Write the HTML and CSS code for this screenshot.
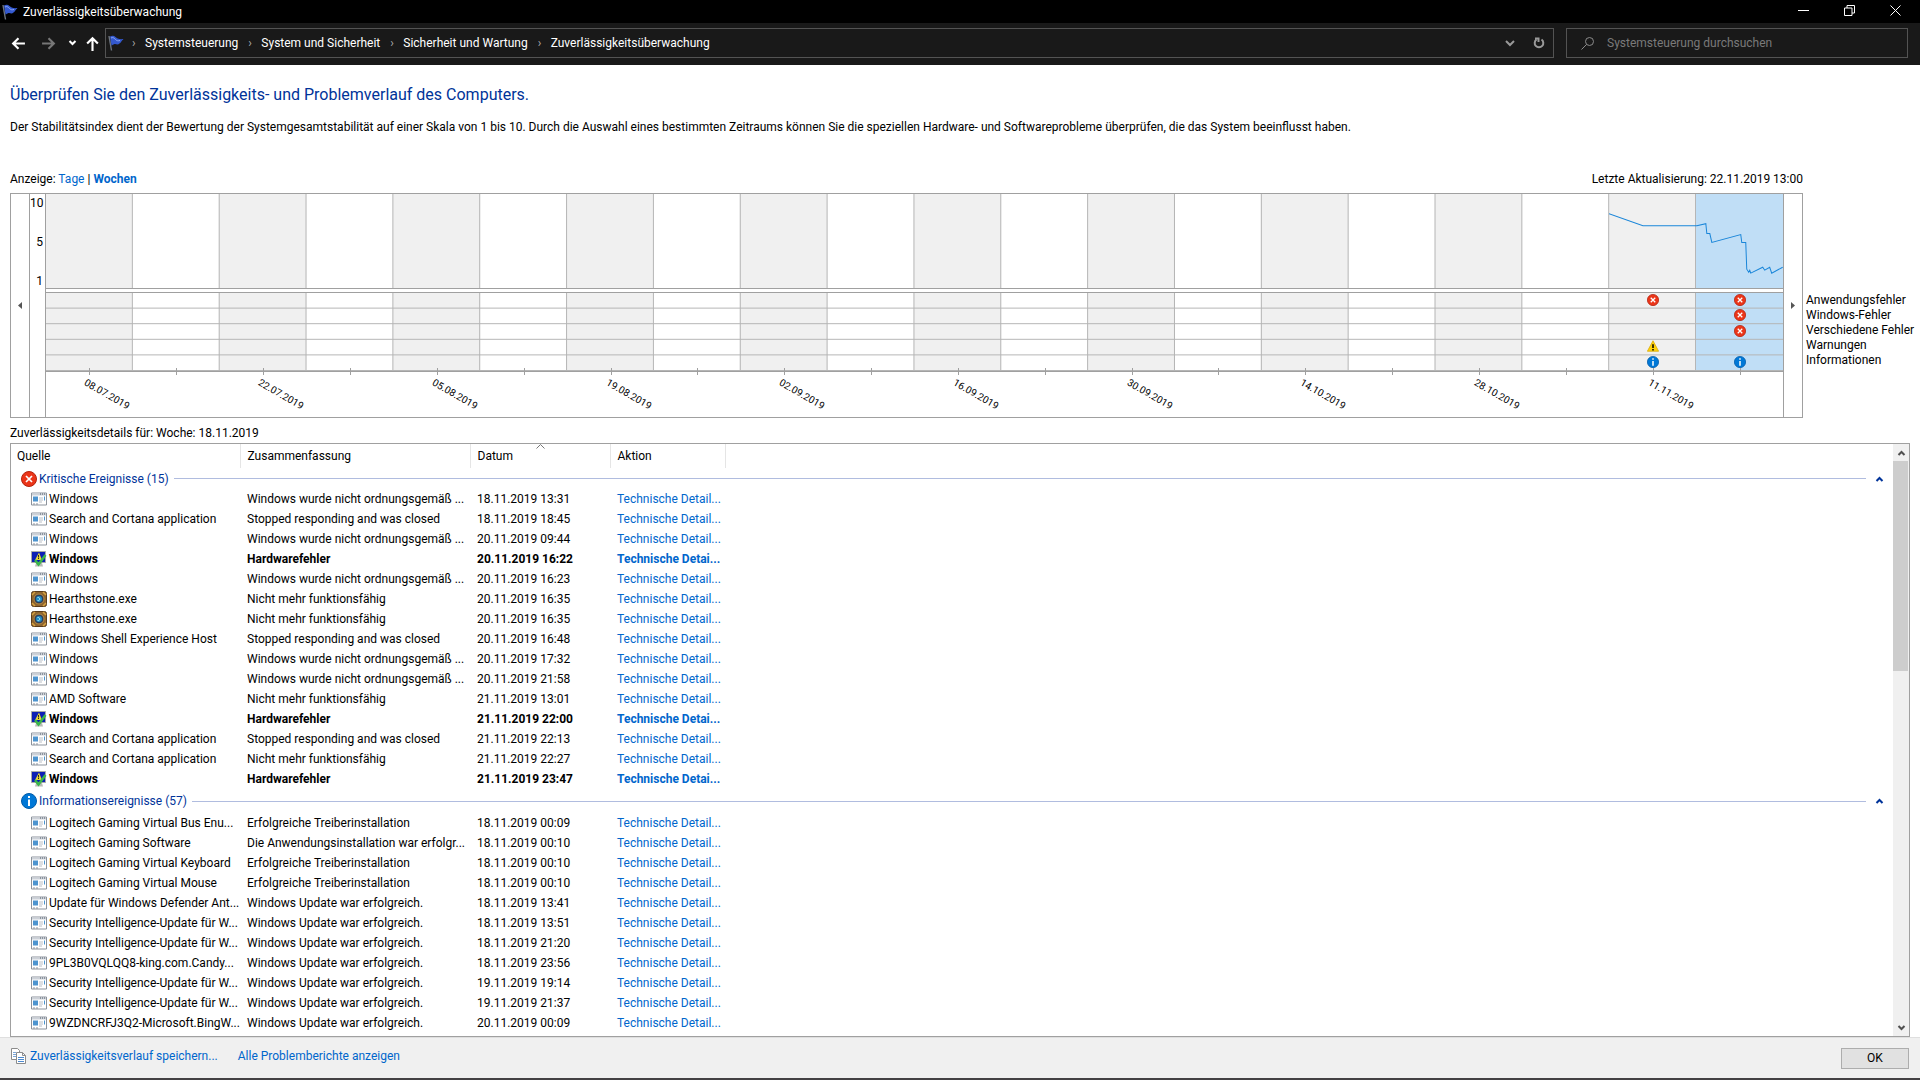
FILE: index.html
```
<!DOCTYPE html>
<html lang="de">
<head>
    <meta charset="UTF-8">
    <meta name="viewport" content="width=device-width, initial-scale=1.0">
    <title>Zuverlässigkeitsüberwachung</title>
    <link rel="stylesheet" href="styles.css">
</head>
<body>
    <svg class="symbols" aria-hidden="true">
        <symbol id="flag" viewBox="0 0 16 16">
            <path d="M1 1l2.500 14.500" stroke="#6d7580" stroke-width="1.400" fill="none"/>
            <path d="M2 1.500C4 0.500 6 0.500 7.500 2S11 4.500 15.500 4C13.500 5.500 13.500 7 11.500 8.500C9.500 10.500 8 8.500 6.500 9S4.500 10 3.500 10.500z" fill="#3459cf"/>
            <path d="M3 3c2-1 3 0 4.500 1.500S10 6 12 5.500" stroke="#8ea8f5" fill="none"/>
        </symbol>
        <symbol id="error" viewBox="0 0 16 16">
            <circle cx="8" cy="8" r="7.500" fill="#eb3519" stroke="#b3220d"/>
            <path d="M5 5l6 6M11 5l-6 6" stroke="#fff" stroke-width="1.700"/>
        </symbol>
        <symbol id="info" viewBox="0 0 16 16">
            <circle cx="8" cy="8" r="7.500" fill="#0078d7" stroke="#005ba8"/>
            <path d="M8 3v2M8 6.500V13" stroke="#fff" stroke-width="2"/>
        </symbol>
        <symbol id="warning" viewBox="0 0 16 16">
            <path d="M8 1l7.500 14H.5z" fill="#ffd20a" stroke="#d9a900"/>
            <path d="M8 5.500v5M8 12v2" stroke="#000" stroke-width="2"/>
        </symbol>
        <symbol id="app" viewBox="0 0 16 13">
            <path d="M.5.5h15v12H.5z" fill="#fff" stroke="#8c939c"/>
            <path d="M1 1h14v2H1z" fill="#ccd1d8"/>
            <path d="M9 1.500h1M11 1.500h1M13 1.500h1" stroke="#4b5665"/>
            <path d="M2 4h5v5H2z" fill="#4d94cf"/>
            <path d="M8 5.500h4M8 7.500h4M8 9.500h3" stroke="#b8bec6"/>
            <path d="M13.500 4v4" stroke="#4d94cf"/>
            <path d="M2 11.500h2M5 11.500h2" stroke="#8c939c"/>
        </symbol>
        <symbol id="hardware" viewBox="0 0 16 16">
            <path d="M.5.5h14v11H.5z" fill="#0c1fb5" stroke="#a9aca6"/>
            <path d="M4 15.500h8l-1-3.500H5z" fill="#b9bcb6"/>
            <path d="M8 1.500L11 9H4z" fill="#e9d53a"/>
            <path d="M7.500 4v2.500M7.500 7v1" stroke="#222"/>
            <path d="M4 9l3.500 4.500L14.500 4" fill="none" stroke="#39b54a" stroke-width="2.500"/>
        </symbol>
        <symbol id="hearthstone" viewBox="0 0 16 16">
            <rect x=".5" y=".5" width="15" height="15" rx="2" fill="#8d6430" stroke="#5a3c1a"/>
            <path d="M1 4l3-3M12 1l3 3M1 12l3 3M15 12l-3 3" stroke="#d5a13f" stroke-width="1.500"/>
            <circle cx="8" cy="8" r="5" fill="#2b3f5c" stroke="#b98a40"/>
            <circle cx="8" cy="8" r="3" fill="#1f8cc4"/>
            <path d="M6.500 9.500c3 1 3-3.500 0-3" fill="none" stroke="#a6ecff"/>
        </symbol>
        <symbol id="up" viewBox="0 0 9 6">
            <path d="M1.500 5l3-3 3 3" fill="none" stroke="currentColor" stroke-width="2"/>
        </symbol>
        <symbol id="down" viewBox="0 0 9 6">
            <path d="M1.500 1l3 3 3-3" fill="none" stroke="currentColor" stroke-width="2"/>
        </symbol>
    </svg>

    <header>
        <div class="titlebar">
            <svg class="flag"><use href="#flag"/></svg>
            <span class="title">Zuverlässigkeitsüberwachung</span>
            <div class="window-buttons">
                <button aria-label="Minimieren"><svg viewBox="0 0 11 11"><path d="M0 5.500h11"/></svg></button>
                <button aria-label="Verkleinern"><svg viewBox="0 0 11 11"><path d="M.5 3h7.500v7.500H.5zM3 3V.5h7.500V8H8"/></svg></button>
                <button aria-label="Schließen"><svg viewBox="0 0 11 11"><path d="M.5.5l10 10M10.500.5l-10 10"/></svg></button>
            </div>
        </div>
        <div class="navbar">
            <button class="back" aria-label="Zurück"><svg viewBox="0 0 14 14"><path d="M13 7H2M7 2L2 7l5 5"/></svg></button>
            <button class="forward" aria-label="Vorwärts" disabled><svg viewBox="0 0 14 14"><path d="M1 7h11M7 2l5 5-5 5"/></svg></button>
            <button class="recent" aria-label="Zuletzt besucht"><svg viewBox="0 0 9 6"><use href="#down"/></svg></button>
            <button class="parent" aria-label="Nach oben"><svg viewBox="0 0 14 14"><path d="M7 14V2M2 7l5-5 5 5"/></svg></button>
            <nav class="address">
                <svg class="flag"><use href="#flag"/></svg>
                <span class="sep">›</span><a href="#">Systemsteuerung</a>
                <span class="sep">›</span><a href="#">System und Sicherheit</a>
                <span class="sep">›</span><a href="#">Sicherheit und Wartung</a>
                <span class="sep">›</span><a href="#">Zuverlässigkeitsüberwachung</a>
                <button class="history" aria-label="Verlauf"><svg viewBox="0 0 10 7"><path d="M1 1l4 4 4-4"/></svg></button>
                <button class="refresh" aria-label="Aktualisieren"><svg viewBox="0 0 12 12"><path d="M8.500 2.500a4.300 4.300 0 1 1-5 0M2 1.500h3.500V5"/></svg></button>
            </nav>
            <label class="search">
                <svg viewBox="0 0 13 13"><circle cx="8.500" cy="4.500" r="4"/><path d="M5.500 7.500L.5 12.500"/></svg>
                <input type="text" placeholder="Systemsteuerung durchsuchen" aria-label="Systemsteuerung durchsuchen">
            </label>
        </div>
    </header>

    <main>
        <h1>Überprüfen Sie den Zuverlässigkeits- und Problemverlauf des Computers.</h1>
        <p class="intro">Der Stabilitätsindex dient der Bewertung der Systemgesamtstabilität auf einer Skala von 1 bis 10. Durch die Auswahl eines bestimmten Zeitraums können Sie die speziellen Hardware- und Softwareprobleme überprüfen, die das System beeinflusst haben.</p>

        <div class="chart-head">
            <span>Anzeige: <a href="#">Tage</a> | <a href="#" class="current">Wochen</a></span>
            <span>Letzte Aktualisierung: 22.11.2019 13:00</span>
        </div>
        <div class="chart-row">
            <div class="chart">
                <button class="scroll-left" aria-label="Frühere Wochen"><svg viewBox="0 0 4 7"><path d="M4 0v7L0 3.500z"/></svg></button>
                <div class="scale"><span>10</span><span>5</span><span>1</span></div>
                <div class="plot">
                    <div class="weeks index">
                        <div class="selected"></div>
                        <svg class="line" viewBox="0 0 174 95" preserveAspectRatio="none">
                            <polyline points="0,20 34,32 88,32 97,30 98,40 101,40 103,49 132,41 133,49 137,49 138,76 140,79 141,77 142,80 154,74 156,77 161,74 163,80 174,74"/>
                        </svg>
                    </div>
                    <div class="weeks events">
                        <div class="week">
                            <svg><use href="#error"/></svg>
                            <svg class="r4"><use href="#warning"/></svg>
                            <svg class="r5"><use href="#info"/></svg>
                        </div>
                        <div class="week selected">
                            <svg><use href="#error"/></svg>
                            <svg><use href="#error"/></svg>
                            <svg><use href="#error"/></svg>
                            <svg class="r5"><use href="#info"/></svg>
                        </div>
                    </div>
                    <div class="dates">
                        <div><span>08.07.2019</span></div>
                        <div><span>22.07.2019</span></div>
                        <div><span>05.08.2019</span></div>
                        <div><span>19.08.2019</span></div>
                        <div><span>02.09.2019</span></div>
                        <div><span>16.09.2019</span></div>
                        <div><span>30.09.2019</span></div>
                        <div><span>14.10.2019</span></div>
                        <div><span>28.10.2019</span></div>
                        <div><span>11.11.2019</span></div>
                    </div>
                </div>
                <button class="scroll-right" aria-label="Spätere Wochen"><svg viewBox="0 0 4 7"><path d="M0 0v7l4-3.500z"/></svg></button>
            </div>
            <ul class="legend">
                <li>Anwendungsfehler</li>
                <li>Windows-Fehler</li>
                <li>Verschiedene Fehler</li>
                <li>Warnungen</li>
                <li>Informationen</li>
            </ul>
        </div>

        <h2>Zuverlässigkeitsdetails für: Woche: 18.11.2019</h2>
        <div class="list">
            <table>
                <colgroup><col class="c-source"><col class="c-summary"><col class="c-date"><col class="c-action"><col></colgroup>
                <thead>
                    <tr><th>Quelle</th><th>Zusammenfassung</th><th class="sorted">Datum<svg viewBox="0 0 9 5"><path d="M.5 4.500l4-4 4 4"/></svg></th><th>Aktion</th><th></th></tr>
                </thead>
                <tbody>
                    <tr class="group"><td colspan="5"><div><svg class="badge"><use href="#error"/></svg>Kritische Ereignisse (15)<i></i><button aria-label="Zuklappen"><svg viewBox="0 0 9 6"><use href="#up"/></svg></button></div></td></tr>
                    <tr><td><svg><use href="#app"/></svg>Windows</td><td>Windows wurde nicht ordnungsgemäß ...</td><td>18.11.2019 13:31</td><td><a href="#">Technische Detail...</a></td></tr>
                    <tr><td><svg><use href="#app"/></svg>Search and Cortana application</td><td>Stopped responding and was closed</td><td>18.11.2019 18:45</td><td><a href="#">Technische Detail...</a></td></tr>
                    <tr><td><svg><use href="#app"/></svg>Windows</td><td>Windows wurde nicht ordnungsgemäß ...</td><td>20.11.2019 09:44</td><td><a href="#">Technische Detail...</a></td></tr>
                    <tr class="new"><td><svg><use href="#hardware"/></svg>Windows</td><td>Hardwarefehler</td><td>20.11.2019 16:22</td><td><a href="#">Technische Detai...</a></td></tr>
                    <tr><td><svg><use href="#app"/></svg>Windows</td><td>Windows wurde nicht ordnungsgemäß ...</td><td>20.11.2019 16:23</td><td><a href="#">Technische Detail...</a></td></tr>
                    <tr><td><svg><use href="#hearthstone"/></svg>Hearthstone.exe</td><td>Nicht mehr funktionsfähig</td><td>20.11.2019 16:35</td><td><a href="#">Technische Detail...</a></td></tr>
                    <tr><td><svg><use href="#hearthstone"/></svg>Hearthstone.exe</td><td>Nicht mehr funktionsfähig</td><td>20.11.2019 16:35</td><td><a href="#">Technische Detail...</a></td></tr>
                    <tr><td><svg><use href="#app"/></svg>Windows Shell Experience Host</td><td>Stopped responding and was closed</td><td>20.11.2019 16:48</td><td><a href="#">Technische Detail...</a></td></tr>
                    <tr><td><svg><use href="#app"/></svg>Windows</td><td>Windows wurde nicht ordnungsgemäß ...</td><td>20.11.2019 17:32</td><td><a href="#">Technische Detail...</a></td></tr>
                    <tr><td><svg><use href="#app"/></svg>Windows</td><td>Windows wurde nicht ordnungsgemäß ...</td><td>20.11.2019 21:58</td><td><a href="#">Technische Detail...</a></td></tr>
                    <tr><td><svg><use href="#app"/></svg>AMD Software</td><td>Nicht mehr funktionsfähig</td><td>21.11.2019 13:01</td><td><a href="#">Technische Detail...</a></td></tr>
                    <tr class="new"><td><svg><use href="#hardware"/></svg>Windows</td><td>Hardwarefehler</td><td>21.11.2019 22:00</td><td><a href="#">Technische Detai...</a></td></tr>
                    <tr><td><svg><use href="#app"/></svg>Search and Cortana application</td><td>Stopped responding and was closed</td><td>21.11.2019 22:13</td><td><a href="#">Technische Detail...</a></td></tr>
                    <tr><td><svg><use href="#app"/></svg>Search and Cortana application</td><td>Nicht mehr funktionsfähig</td><td>21.11.2019 22:27</td><td><a href="#">Technische Detail...</a></td></tr>
                    <tr class="new"><td><svg><use href="#hardware"/></svg>Windows</td><td>Hardwarefehler</td><td>21.11.2019 23:47</td><td><a href="#">Technische Detai...</a></td></tr>
                </tbody>
                <tbody>
                    <tr class="group"><td colspan="5"><div><svg class="badge"><use href="#info"/></svg>Informationsereignisse (57)<i></i><button aria-label="Zuklappen"><svg viewBox="0 0 9 6"><use href="#up"/></svg></button></div></td></tr>
                    <tr><td><svg><use href="#app"/></svg>Logitech Gaming Virtual Bus Enu...</td><td>Erfolgreiche Treiberinstallation</td><td>18.11.2019 00:09</td><td><a href="#">Technische Detail...</a></td></tr>
                    <tr><td><svg><use href="#app"/></svg>Logitech Gaming Software</td><td>Die Anwendungsinstallation war erfolgr...</td><td>18.11.2019 00:10</td><td><a href="#">Technische Detail...</a></td></tr>
                    <tr><td><svg><use href="#app"/></svg>Logitech Gaming Virtual Keyboard</td><td>Erfolgreiche Treiberinstallation</td><td>18.11.2019 00:10</td><td><a href="#">Technische Detail...</a></td></tr>
                    <tr><td><svg><use href="#app"/></svg>Logitech Gaming Virtual Mouse</td><td>Erfolgreiche Treiberinstallation</td><td>18.11.2019 00:10</td><td><a href="#">Technische Detail...</a></td></tr>
                    <tr><td><svg><use href="#app"/></svg>Update für Windows Defender Ant...</td><td>Windows Update war erfolgreich.</td><td>18.11.2019 13:41</td><td><a href="#">Technische Detail...</a></td></tr>
                    <tr><td><svg><use href="#app"/></svg>Security Intelligence-Update für W...</td><td>Windows Update war erfolgreich.</td><td>18.11.2019 13:51</td><td><a href="#">Technische Detail...</a></td></tr>
                    <tr><td><svg><use href="#app"/></svg>Security Intelligence-Update für W...</td><td>Windows Update war erfolgreich.</td><td>18.11.2019 21:20</td><td><a href="#">Technische Detail...</a></td></tr>
                    <tr><td><svg><use href="#app"/></svg>9PL3B0VQLQQ8-king.com.Candy...</td><td>Windows Update war erfolgreich.</td><td>18.11.2019 23:56</td><td><a href="#">Technische Detail...</a></td></tr>
                    <tr><td><svg><use href="#app"/></svg>Security Intelligence-Update für W...</td><td>Windows Update war erfolgreich.</td><td>19.11.2019 19:14</td><td><a href="#">Technische Detail...</a></td></tr>
                    <tr><td><svg><use href="#app"/></svg>Security Intelligence-Update für W...</td><td>Windows Update war erfolgreich.</td><td>19.11.2019 21:37</td><td><a href="#">Technische Detail...</a></td></tr>
                    <tr><td><svg><use href="#app"/></svg>9WZDNCRFJ3Q2-Microsoft.BingW...</td><td>Windows Update war erfolgreich.</td><td>20.11.2019 00:09</td><td><a href="#">Technische Detail...</a></td></tr>
                </tbody>
            </table>
            <div class="scrollbar">
                <button aria-label="Nach oben blättern"><svg viewBox="0 0 9 6"><use href="#up"/></svg></button>
                <div class="thumb"></div>
                <button aria-label="Nach unten blättern"><svg viewBox="0 0 9 6"><use href="#down"/></svg></button>
            </div>
        </div>
    </main>

    <footer>
        <div class="links">
            <svg class="copy" viewBox="0 0 15 16">
                <path d="M.5.5h6l2 2v9h-8z" fill="#fff" stroke="#8c8c8c"/>
                <path d="M2 4.500h3M2 6.500h3M2 8.500h3" stroke="#7ba7d9"/>
                <path d="M5.500 4.500h6l3 3v8h-9z" fill="#fff" stroke="#8c8c8c"/>
                <path d="M11.500 4.500v3h3" fill="none" stroke="#8c8c8c"/>
                <path d="M7 9.500h6M7 11.500h6M7 13.500h6" stroke="#4d8ad0"/>
            </svg>
            <a href="#">Zuverlässigkeitsverlauf speichern...</a>
            <a href="#" class="reports">Alle Problemberichte anzeigen</a>
        </div>
        <button class="ok">OK</button>
    </footer>
</body>
</html>
```
FILE: styles.css
```
*{
    margin: 0;
    padding: 0;
    box-sizing: border-box;
}
body{
    display: flex;
    flex-direction: column;
    height: 100vh;
    overflow: hidden;
    background: #fff;
    color: #000;
    font: 12px/16px Roboto, "Open Sans", sans-serif;
}
a{
    color: #0066cc;
    text-decoration: none;
}
button{
    border: 0;
    background: none;
    color: inherit;
    font: inherit;
}
ul{
    list-style: none;
}
svg{
    display: block;
    flex: none;
}
.symbols{
    position: absolute;
    width: 0;
    height: 0;
}
.flag{
    width: 16px;
    height: 16px;
}

/* title bar */
.titlebar{
    display: flex;
    align-items: center;
    height: 23px;
    padding: 0 2px;
    background: #000;
    color: #fff;
}
.title{
    margin-left: 5px;
}
.window-buttons{
    display: flex;
    margin-left: auto;
}
.window-buttons button{
    display: flex;
    justify-content: center;
    width: 46px;
    padding-bottom: 3px;
}
.window-buttons svg{
    width: 11px;
    height: 11px;
    fill: none;
    stroke: #fff;
}

/* navigation bar */
.navbar{
    display: flex;
    align-items: center;
    height: 42px;
    padding: 0 12px 2px 11px;
    background: #191919;
    color: #fff;
}
.navbar button svg{
    fill: none;
    stroke: currentColor;
    stroke-width: 2;
}
.back svg, .forward svg, .parent svg{
    width: 15px;
    height: 15px;
}
.forward{
    margin-left: 15px;
    color: #777;
}
.recent{
    margin-left: 12px;
}
.recent svg{
    width: 9px;
    height: 6px;
}
.parent{
    margin-left: 8px;
}
.address{
    display: flex;
    flex: 1;
    align-items: center;
    height: 30px;
    margin-left: 5px;
    padding-left: 2px;
    border: 1px solid #535353;
}
.address a{
    color: #fff;
}
.sep{
    width: 21px;
    padding-left: 8px;
    color: #aaa;
}
.sep ~ .sep{
    width: 23px;
    padding-left: 10px;
}
.address .history{
    margin-left: auto;
    padding: 0 10px;
    color: #999;
}
.history svg{
    width: 10px;
    height: 7px;
}
.refresh{
    padding: 0 8px;
    color: #999;
}
.refresh svg{
    width: 12px;
    height: 12px;
}
.search{
    display: flex;
    align-items: center;
    width: 342px;
    height: 30px;
    margin-left: 12px;
    padding-left: 14px;
    border: 1px solid #535353;
}
.search svg{
    width: 13px;
    height: 13px;
    fill: none;
    stroke: #8a8a8a;
}
.search input{
    flex: 1;
    margin-left: 13px;
    border: 0;
    outline: 0;
    background: none;
    color: #fff;
    font: inherit;
}
.search input::placeholder{
    color: #7a7a7a;
}

/* content */
main{
    display: flex;
    flex: 1;
    flex-direction: column;
    min-height: 0;
    padding: 18px 10px 0;
}
h1{
    color: #003399;
    font-size: 16px;
    font-weight: normal;
    line-height: 24px;
}
.intro{
    margin-top: 12px;
    white-space: nowrap;
}
.chart-head{
    display: flex;
    justify-content: space-between;
    margin: 36px 107px 6px 0;
}
.current{
    font-weight: bold;
}
.chart-row{
    display: flex;
}
.chart{
    display: flex;
    flex: 1;
    height: 225px;
    border: 1px solid #a0a0a0;
}
.chart button{
    display: flex;
    align-items: center;
    justify-content: center;
    width: 18px;
}
.chart button svg{
    width: 4px;
    height: 7px;
    fill: #555;
}
.chart .scroll-right{
    width: 19px;
    border-left: 1px solid #a0a0a0;
}
.scale{
    display: flex;
    flex-direction: column;
    gap: 23px;
    width: 16px;
    padding: 1px 2px 0 0;
    border-left: 1px solid #a0a0a0;
    text-align: right;
}
.plot{
    flex: 1;
    border-left: 1px solid #a0a0a0;
}
.weeks{
    display: grid;
    grid-template-columns: repeat(20, 1fr);
    border-bottom: 1px solid #a0a0a0;
    background: linear-gradient(90deg, #f0f0f0 calc(50% - 1px), #b4b4b4 calc(50% - 1px), #b4b4b4 50%, #fff 50%, #fff calc(100% - 1px), #b4b4b4 calc(100% - 1px)) 0 0 / 10% 100%;
}
.selected{
    grid-column: 20;
    background: #c0def6;
}
.index{
    grid-template-rows: 94px;
}
.index .selected{
    grid-row: 1;
}
.line{
    grid-row: 1;
    grid-column: 19 / 21;
    width: 100%;
    height: 94px;
    fill: none;
    stroke: #1a86d9;
}
.line polyline{
    vector-effect: non-scaling-stroke;
}
.events{
    margin-top: 3px;
    border-top: 1px solid #a0a0a0;
    position: relative;
}
/* row lines run over the week columns */
.events::after{
    content: "";
    position: absolute;
    top: 0;
    right: 0;
    bottom: 0;
    left: 0;
    background: linear-gradient(transparent calc(100% - 1px), #b4b4b4 calc(100% - 1px)) 0 0 / 100% 20%;
}
.week{
    display: grid;
    grid-template-rows: repeat(5, 1fr);
    grid-column: 19;
    justify-content: center;
    align-items: start;
    height: 78px;
    padding-top: 1px;
    overflow: hidden;
}
.week.selected{
    grid-column: 20;
}
.week svg{
    width: 12px;
    height: 12px;
}
.week .r4{
    grid-row: 4;
}
.week .r5{
    grid-row: 5;
}
.dates{
    display: grid;
    grid-template-columns: repeat(10, 1fr);
}
.dates div{
    position: relative;
    height: 45px;
}
.dates div::before, .dates div::after{
    content: "";
    position: absolute;
    top: -4px;
    left: 25%;
    width: 1px;
    height: 7px;
    background: #a0a0a0;
}
.dates div::after{
    left: 75%;
}
.dates span{
    position: absolute;
    top: 4px;
    left: calc(25% - 4px);
    font-size: 10px;
    line-height: 12px;
    transform: rotate(30deg);
    transform-origin: 0 50%;
}
.legend{
    width: 107px;
    padding: 100px 0 0 3px;
    line-height: 15px;
    white-space: nowrap;
}

/* event list */
h2{
    margin: 7px 0 2px;
    font-size: 12px;
    font-weight: normal;
}
.list{
    display: flex;
    flex: 1;
    min-height: 0;
    border: 1px solid #a0a0a0;
}
table{
    flex: 1;
    align-self: flex-start;
    width: 100%;
    border-collapse: collapse;
    table-layout: fixed;
}
.c-source{
    width: 229px;
}
.c-summary{
    width: 230px;
}
.c-date{
    width: 140px;
}
.c-action{
    width: 115px;
}
th{
    height: 24px;
    padding-left: 7px;
    border-right: 1px solid #e5e5e5;
    font-weight: normal;
    text-align: left;
}
th:first-child{
    padding-left: 6px;
}
th:last-child{
    border: 0;
}
.sorted{
    position: relative;
}
.sorted svg{
    position: absolute;
    top: 0;
    left: calc(50% - 4px);
    width: 9px;
    height: 5px;
    fill: none;
    stroke: #777;
}
td{
    height: 20px;
    padding-left: 7px;
    white-space: nowrap;
}
td:first-child{
    padding-left: 20px;
}
td > svg{
    display: inline-block;
    width: 16px;
    height: 16px;
    margin-right: 2px;
    vertical-align: middle;
}
.new{
    font-weight: bold;
}
.group td:first-child{
    height: 21px;
    padding-left: 10px;
    color: #003399;
}
tbody + tbody .group td:first-child{
    height: 24px;
}
.group div{
    display: flex;
    align-items: center;
}
.badge{
    width: 16px;
    height: 16px;
    margin-right: 2px;
}
.group i{
    flex: 1;
    height: 1px;
    margin: 0 9px 0 5px;
    background: #b0bcdf;
}
.group button{
    padding-right: 9px;
}
.group button svg{
    width: 9px;
    height: 6px;
}
.scrollbar{
    display: flex;
    flex-direction: column;
    width: 16px;
    background: #f0f0f0;
}
.scrollbar button{
    display: flex;
    align-items: center;
    justify-content: center;
    height: 17px;
    color: #505050;
}
.scrollbar button:last-child{
    margin-top: auto;
}
.scrollbar button svg{
    width: 9px;
    height: 6px;
}
.thumb{
    width: 15px;
    height: 210px;
    background: #cdcdcd;
}

/* footer */
footer{
    display: flex;
    align-items: center;
    height: 43px;
    padding: 0 11px;
    border-top: 1px solid #dfdfdf;
    border-bottom: 2px solid #434143;
    background: #f0f0f0;
}
.links{
    display: flex;
    align-items: center;
    padding-bottom: 5px;
}
.copy{
    width: 15px;
    height: 16px;
    margin-right: 4px;
}
.reports{
    margin-left: 20px;
}
.ok{
    width: 68px;
    height: 21px;
    margin-left: auto;
    border: 1px solid #adadad;
    background: #e1e1e1;
}
```
